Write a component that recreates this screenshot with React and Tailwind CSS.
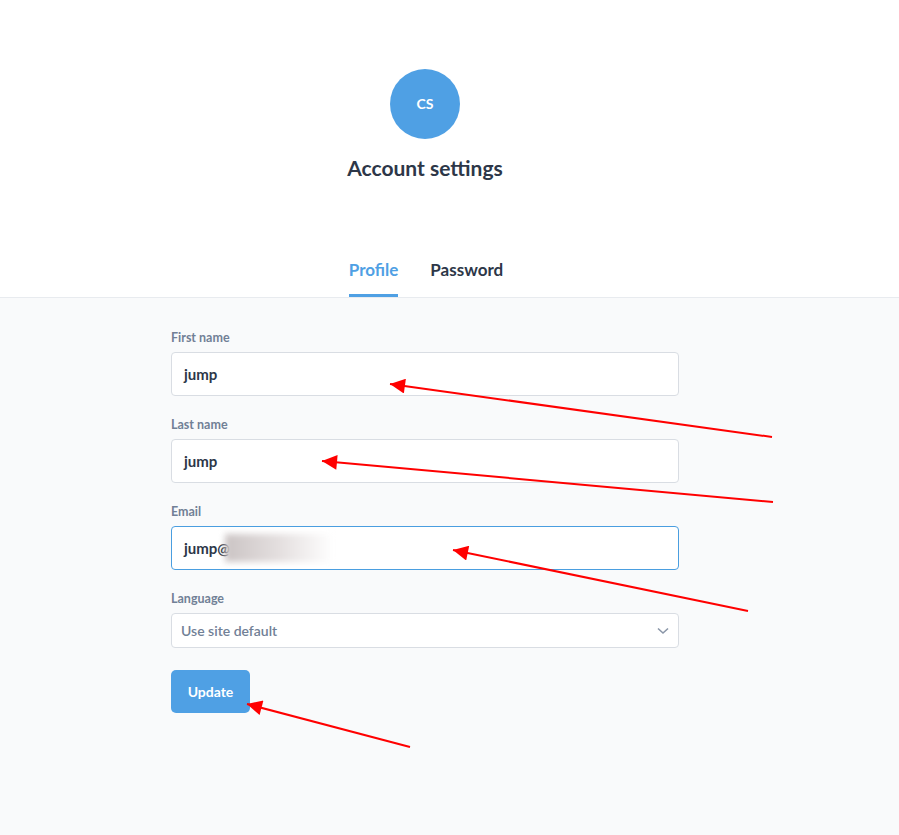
import React from "react";

function Field({ label, children, mb = "mb-[21px]" }) {
  return (
    <div className={mb}>
      <div className="text-[12.5px] leading-[16px] font-bold text-[#718096] mb-[6px]">{label}</div>
      {children}
    </div>
  );
}

export default function App() {
  return (
    <div className="relative min-h-[835px] w-full flex flex-col bg-[#f9fafb]" style={{ fontFamily: "Lato, 'Open Sans', sans-serif" }}>
      <div className="bg-white border-b border-[#e8ebef]">
        <div className="w-[850px] flex flex-col items-center pt-[69px]">
          <div className="w-[70px] h-[70px] rounded-full bg-[#4fa0e4] flex items-center justify-center text-white font-bold text-[14px] leading-none pb-[1px]">
            CS
          </div>
          <h1 className="mt-[15px] text-[21px] leading-[28px] font-bold text-[#2d3748]">Account settings</h1>
          <div className="mt-[75px] flex gap-[32px] pl-[2px]">
            <div className="text-[17px] leading-[25px] font-bold text-[#4fa0e4] pb-[12px] border-b-[3px] border-[#4fa0e4]">Profile</div>
            <div className="text-[17px] leading-[25px] font-bold text-[#2d3748] pb-[12px] border-b-[3px] border-transparent">Password</div>
          </div>
        </div>
      </div>
      <div className="flex-1">
        <div className="w-[850px] flex justify-center pt-[32px]">
          <div className="w-[508px]">
            <Field label="First name">
              <div className="h-[44px] bg-white border border-[#d9dde3] rounded-[4px] flex items-center pl-[12px] text-[15px] font-bold text-[#2d3748]">jump</div>
            </Field>
            <Field label="Last name">
              <div className="h-[44px] bg-white border border-[#d9dde3] rounded-[4px] flex items-center pl-[12px] text-[15px] font-bold text-[#2d3748]">jump</div>
            </Field>
            <Field label="Email">
              <div className="h-[44px] bg-white border border-[#4a9ee0] rounded-[4px] flex items-center pl-[12px] text-[15px] font-bold text-[#2d3748]">
                <span>jump@</span>
                <span className="inline-block ml-[-5px] w-[108px] h-[28px] bg-gradient-to-r from-[#cbc4c4] via-[#e4dfdf] to-white blur-[3px]"></span>
              </div>
            </Field>
            <Field label="Language" mb="mb-[22px]">
              <div className="h-[35px] bg-white border border-[#d9dde3] rounded-[4px] flex items-center justify-between pl-[9px] pr-[9px] text-[14px] font-semibold text-[#718096] mt-[2px]">
                <span>Use site default</span>
                <svg width="12" height="8" viewBox="0 0 12 8" fill="none">
                  <path d="M1 1.5 L6 6 L11 1.5" stroke="#8a96a8" strokeWidth="1.6" />
                </svg>
              </div>
            </Field>
            <button className="w-[79px] h-[43px] bg-[#4fa0e4] rounded-[5px] text-white font-bold text-[14px]">Update</button>
          </div>
        </div>
      </div>
      <svg className="absolute left-0 top-0 pointer-events-none" width="899" height="835" viewBox="0 0 899 835">
        <defs>
          <marker id="ah" viewBox="0 0 10 10" refX="10" refY="5" markerUnits="userSpaceOnUse" markerWidth="22" markerHeight="15" orient="auto">
            <path d="M0 0 L10 5 L0 10 z" fill="#ff0000" />
          </marker>
        </defs>
        <line x1="772" y1="437" x2="390" y2="384" stroke="#ff0000" strokeWidth="2" markerEnd="url(#ah)" />
        <line x1="773" y1="502" x2="322" y2="461" stroke="#ff0000" strokeWidth="2" markerEnd="url(#ah)" />
        <line x1="748" y1="611" x2="453" y2="550" stroke="#ff0000" strokeWidth="2" markerEnd="url(#ah)" />
        <line x1="410" y1="747" x2="247" y2="704" stroke="#ff0000" strokeWidth="2" markerEnd="url(#ah)" />
      </svg>
    </div>
  );
}
